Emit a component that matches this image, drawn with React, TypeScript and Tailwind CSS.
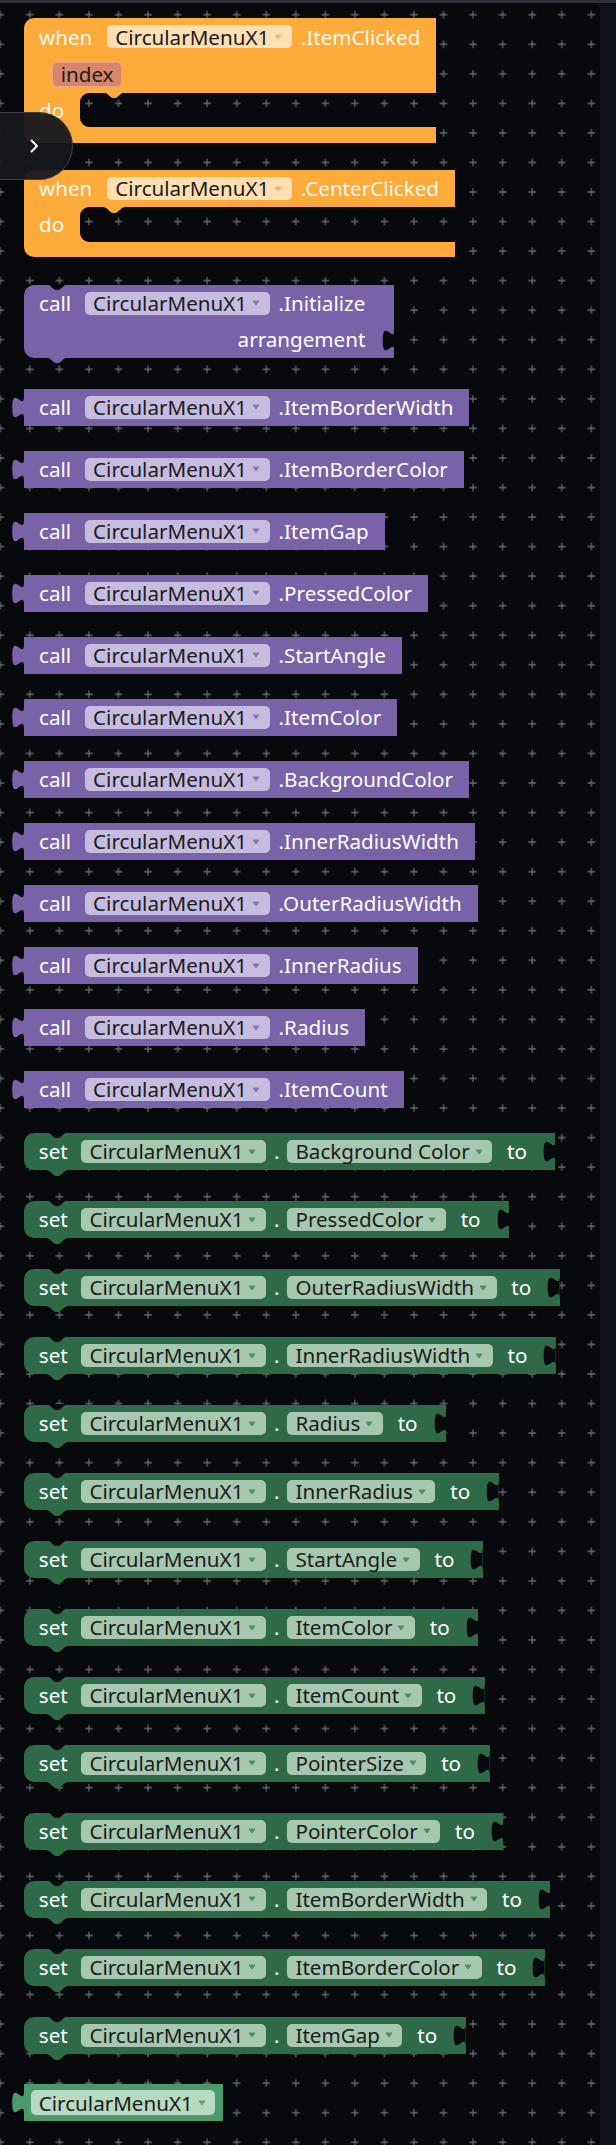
import React from "react";

const CANVAS = "#08090d";
const ORANGE = "#fdab3b";
const PURPLE = "#7862a8";
const GREEN = "#2e6a47";
const GREEN2 = "#4c9a6b";

const NOTCH = "M0 0 C4 0 7 5.9 10 5.9 H12.2 C15.2 5.9 18.2 0 22.2 0 Z";

function Arrow({ color }: { color: string }) {
  return (
    <svg width="8" height="6" viewBox="0 0 8 6" className="ml-[5px] shrink-0">
      <path d="M1 1 H7 L4 5 Z" fill={color} stroke={color} strokeWidth="1" strokeLinejoin="round" />
    </svg>
  );
}

function Pill({ text, bg, arrow, cls = "" }: { text: string; bg: string; arrow: string; cls?: string }) {
  return (
    <span
      className={`inline-flex items-center h-[23px] rounded-[5px] pl-[8px] pr-[9.5px] text-[#1b1b1b] ${cls}`}
      style={{ backgroundColor: bg }}
    >
      <span>{text}</span>
      <Arrow color={arrow} />
    </span>
  );
}

function OutputTab({ color }: { color: string }) {
  return (
    <svg className="absolute left-[-12px] top-0 overflow-visible" width="13" height="37" viewBox="0 0 13 37">
      <path d="M13 7.4 L12 7.4 C12 22.2 0.2 -4.4 0.2 18.5 S12 14.8 12 29.6 L13 29.6 Z" fill={color} />
    </svg>
  );
}

function InputNotch() {
  return (
    <svg className="absolute right-0 top-0 overflow-visible" width="12.5" height="37" viewBox="0 0 12.5 37">
      <path d="M12.6 7.4 L12.5 7.4 C12.5 22.2 0.7 -4.4 0.7 18.5 S12.5 14.8 12.5 29.6 L12.6 29.6 Z" fill={CANVAS} />
    </svg>
  );
}

function TopNotch() {
  return (
    <svg className="absolute left-[22px] top-[-0.5px]" width="23" height="7" viewBox="0 0 23 7">
      <path d={NOTCH} fill={CANVAS} />
    </svg>
  );
}

function BottomBump({ color }: { color: string }) {
  return (
    <svg className="absolute left-[22px] top-[calc(100%-0.5px)]" width="23" height="7" viewBox="0 0 23 7">
      <path d={NOTCH} fill={color} />
    </svg>
  );
}

function EventBlock({ event, param, cls = "" }: { event: string; param?: string; cls?: string }) {
  return (
    <div className={`flex flex-col w-fit ${cls}`}>
      <div className="bg-[#fdab3b] rounded-tl-[10px] pl-[15px] pr-[16px] text-[#fffaf0]">
        <div className="flex items-center h-[37.4px]">
          <span>when</span>
          <Pill text="CircularMenuX1" bg="#ffdfb3" arrow="#f2b461" cls="ml-[15px]" />
          <span className="ml-[9px]">.{event}</span>
        </div>
        {param && (
          <div className="flex items-center h-[37px] pl-[12.7px]">
            <span className="inline-flex items-center h-[25px] rounded-[5px] pl-[8px] pr-[7px] bg-[#d5866b] border border-[#e8a58b] text-[#1b1b1b]">
              {param}
            </span>
          </div>
        )}
      </div>
      <div className="flex h-[34.5px]">
        <div className="w-[56px] bg-[#fdab3b] flex items-center pl-[15px] text-[#fffaf0]">do</div>
        <div className="relative w-[60px]">
          <svg className="absolute left-0 top-0" width="9" height="9" viewBox="0 0 9 9">
            <path d="M0 0 H9 A9 9 0 0 0 0 9 Z" fill={ORANGE} />
          </svg>
          <svg className="absolute left-0 bottom-0" width="9" height="9" viewBox="0 0 9 9">
            <path d="M0 9 V0 A9 9 0 0 0 9 9 Z" fill={ORANGE} />
          </svg>
          <svg className="absolute left-[23px] top-[-0.5px]" width="23" height="7" viewBox="0 0 23 7">
            <path d={NOTCH} fill={ORANGE} />
          </svg>
        </div>
      </div>
      <div className="h-[15.5px] bg-[#fdab3b] rounded-bl-[10px]" />
    </div>
  );
}

function InitBlock() {
  return (
    <div className="relative w-fit mt-[27.3px] bg-[#7862a8] rounded-l-[10px] pl-[15px] pr-[28.7px] text-white">
      <TopNotch />
      <BottomBump color={PURPLE} />
      <div className="flex items-center h-[37px]">
        <span>call</span>
        <Pill text="CircularMenuX1" bg="#c6bcdf" arrow="#8a7ab5" cls="ml-[14px]" />
        <span className="ml-[9px]">.Initialize</span>
      </div>
      <div className="relative flex items-center justify-end h-[36px]">
        <span>arrangement</span>
        <div className="absolute right-[-28.7px] top-0 w-[12.5px] h-[36px]">
          <InputNotch />
        </div>
      </div>
    </div>
  );
}

function CallBlock({ method, first }: { method: string; first?: boolean }) {
  return (
    <div
      className={`relative flex items-center h-[37px] w-fit bg-[#7862a8] pl-[15px] pr-[16px] text-white ${
        first ? "mt-[31px]" : "mt-[25.05px]"
      }`}
    >
      <OutputTab color={PURPLE} />
      <span>call</span>
      <Pill text="CircularMenuX1" bg="#c6bcdf" arrow="#8a7ab5" cls="ml-[14px]" />
      <span className="ml-[9px]">.{method}</span>
    </div>
  );
}

function SetBlock({ prop, first }: { prop: string; first?: boolean }) {
  return (
    <div
      className={`relative flex items-center h-[37.3px] w-fit bg-[#2e6a47] rounded-l-[10px] pl-[14.8px] pr-[28.5px] text-white ${
        first ? "mt-[24.8px]" : "mt-[30.7px]"
      }`}
    >
      <TopNotch />
      <BottomBump color={GREEN} />
      <InputNotch />
      <span>set</span>
      <Pill text="CircularMenuX1" bg="#a6c8b0" arrow="#4f8e66" cls="ml-[13.7px]" />
      <span className="ml-[8px]">.</span>
      <Pill text={prop} bg="#a6c8b0" arrow="#4f8e66" cls="ml-[8px]" />
      <span className="ml-[14.8px]">to</span>
    </div>
  );
}

function ComponentBlock() {
  return (
    <div className="relative flex items-center h-[36.7px] w-fit bg-[#4c9a6b] px-[7.4px] mt-[30.4px]">
      <OutputTab color={GREEN2} />
      <span className="inline-flex items-center h-[25px] rounded-[5px] pl-[7.4px] pr-[9.5px] bg-[#b6dac2] text-[#1b1b1b]">
        <span>CircularMenuX1</span>
        <Arrow color="#5fa57a" />
      </span>
    </div>
  );
}

const methods = [
  "ItemBorderWidth",
  "ItemBorderColor",
  "ItemGap",
  "PressedColor",
  "StartAngle",
  "ItemColor",
  "BackgroundColor",
  "InnerRadiusWidth",
  "OuterRadiusWidth",
  "InnerRadius",
  "Radius",
  "ItemCount",
];

const props = [
  "Background Color",
  "PressedColor",
  "OuterRadiusWidth",
  "InnerRadiusWidth",
  "Radius",
  "InnerRadius",
  "StartAngle",
  "ItemColor",
  "ItemCount",
  "PointerSize",
  "PointerColor",
  "ItemBorderWidth",
  "ItemBorderColor",
  "ItemGap",
];

export default function App() {
  return (
    <div className="w-[616px] h-[2145px] bg-[#0e1218] flex flex-col overflow-hidden font-['Noto_Sans',sans-serif] text-[20.6px] leading-none">
      <div className="h-[3px] bg-[#2c2f35] shrink-0" />
      <div className="flex flex-1">
        <div className="relative w-[600px] bg-[#08090d] rounded-tr-[8px] overflow-hidden">
          <svg className="absolute inset-0" width="600" height="2142">
            <defs>
              <pattern id="grid" width="29.55" height="29.55" patternUnits="userSpaceOnUse" x="-14.475" y="-3.075">
                <path d="M11 14.775 H18.55 M14.775 11 V18.55" stroke="#65686f" strokeWidth="1.3" />
              </pattern>
            </defs>
            <rect width="600" height="2142" fill="url(#grid)" />
          </svg>
          <div className="relative flex flex-col items-start pl-[24px] pt-[15.3px]">
            <EventBlock event="ItemClicked" param="index" />
            <EventBlock event="CenterClicked" cls="mt-[27.3px]" />
            <InitBlock />
            {methods.map((m, i) => (
              <CallBlock key={m} method={m} first={i === 0} />
            ))}
            {props.map((p, i) => (
              <SetBlock key={p} prop={p} first={i === 0} />
            ))}
            <ComponentBlock />
          </div>
          <div className="absolute left-0 top-[108.7px] w-[73px] h-[68px] rounded-r-[34px] bg-[#16181c]/95 border border-l-0 border-[#3a3d43] flex items-center justify-center pr-[4px]">
            <svg width="12" height="14" viewBox="0 0 12 14">
              <path d="M3.5 1.5 L9 7 L3.5 12.5" fill="none" stroke="#ffffff" strokeWidth="2" strokeLinecap="round" strokeLinejoin="round" />
            </svg>
          </div>
        </div>
        <div className="flex-1" />
      </div>
    </div>
  );
}
